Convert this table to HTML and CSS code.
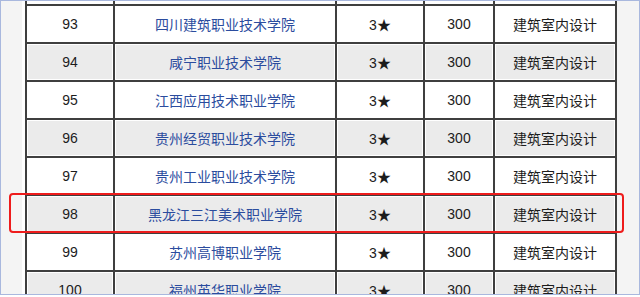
FILE: index.html
```html
<!DOCTYPE html>
<html lang="zh-CN">
<head>
<meta charset="utf-8">
<title>院校列表</title>
<link rel="stylesheet" href="styles.css">
</head>
<body>
<div class="frame">
  <div class="sheet">
    <div class="row tail">
      <div class="cell"></div><div class="cell"></div><div class="cell"></div><div class="cell"></div><div class="cell"></div>
    </div>
    <div class="row">
      <div class="cell">93</div><div class="cell school">四川建筑职业技术学院</div><div class="cell">3★</div><div class="cell">300</div><div class="cell">建筑室内设计</div>
    </div>
    <div class="row alt">
      <div class="cell">94</div><div class="cell school">咸宁职业技术学院</div><div class="cell">3★</div><div class="cell">300</div><div class="cell">建筑室内设计</div>
    </div>
    <div class="row">
      <div class="cell">95</div><div class="cell school">江西应用技术职业学院</div><div class="cell">3★</div><div class="cell">300</div><div class="cell">建筑室内设计</div>
    </div>
    <div class="row alt">
      <div class="cell">96</div><div class="cell school">贵州经贸职业技术学院</div><div class="cell">3★</div><div class="cell">300</div><div class="cell">建筑室内设计</div>
    </div>
    <div class="row">
      <div class="cell">97</div><div class="cell school">贵州工业职业技术学院</div><div class="cell">3★</div><div class="cell">300</div><div class="cell">建筑室内设计</div>
    </div>
    <div class="row alt">
      <div class="cell">98</div><div class="cell school">黑龙江三江美术职业学院</div><div class="cell">3★</div><div class="cell">300</div><div class="cell">建筑室内设计</div>
    </div>
    <div class="row">
      <div class="cell">99</div><div class="cell school">苏州高博职业学院</div><div class="cell">3★</div><div class="cell">300</div><div class="cell">建筑室内设计</div>
    </div>
    <div class="row alt">
      <div class="cell">100</div><div class="cell school">福州英华职业学院</div><div class="cell">3★</div><div class="cell">300</div><div class="cell">建筑室内设计</div>
    </div>
  </div>
  <div class="highlight"></div>
</div>
</body>
</html>
```

FILE: styles.css
```css
html, body {
  margin: 0;
  padding: 0;
  background: #ffffff;
}

.frame {
  position: relative;
  box-sizing: border-box;
  width: 640px;
  height: 295px;
  border-top: 1px solid #a9b8de;
  border-left: 1px solid #a9b8de;
  border-right: 1px solid #a9b8de;
  border-bottom: 1px solid #a9b8de;
  background: #f4f4f4;
  overflow: hidden;
  padding-left: 21px;
  font-family: "Liberation Sans", "Noto Sans CJK SC", sans-serif;
  font-size: 14px;
  color: #1c1c1c;
}

.sheet {
  width: 592px;
  border-left: 3px solid #ffffff;
  background: #ffffff;
}

.row {
  display: grid;
  grid-template-columns: 90px 222px 88px 70px 122px;
  height: 38px;
  box-sizing: border-box;
  border-top: 2px solid #3f3f3f;
}

.row.tail {
  height: 3px;
  border-top: none;
}

.cell {
  box-sizing: border-box;
  border-right: 2px solid #3f3f3f;
  display: flex;
  align-items: center;
  justify-content: center;
  white-space: nowrap;
  background: #ffffff;
}

.cell:first-child {
  border-left: 2px solid #3f3f3f;
}

.row.alt .cell {
  background: #ebebeb;
  box-shadow: inset 0 0 0 1px #ffffff;
}

.school {
  color: #2b4c9e;
}

.highlight {
  position: absolute;
  left: 8px;
  top: 192px;
  width: 615px;
  height: 40px;
  box-sizing: border-box;
  border: 2px solid #ee1c1c;
  border-radius: 4px;
}
```
